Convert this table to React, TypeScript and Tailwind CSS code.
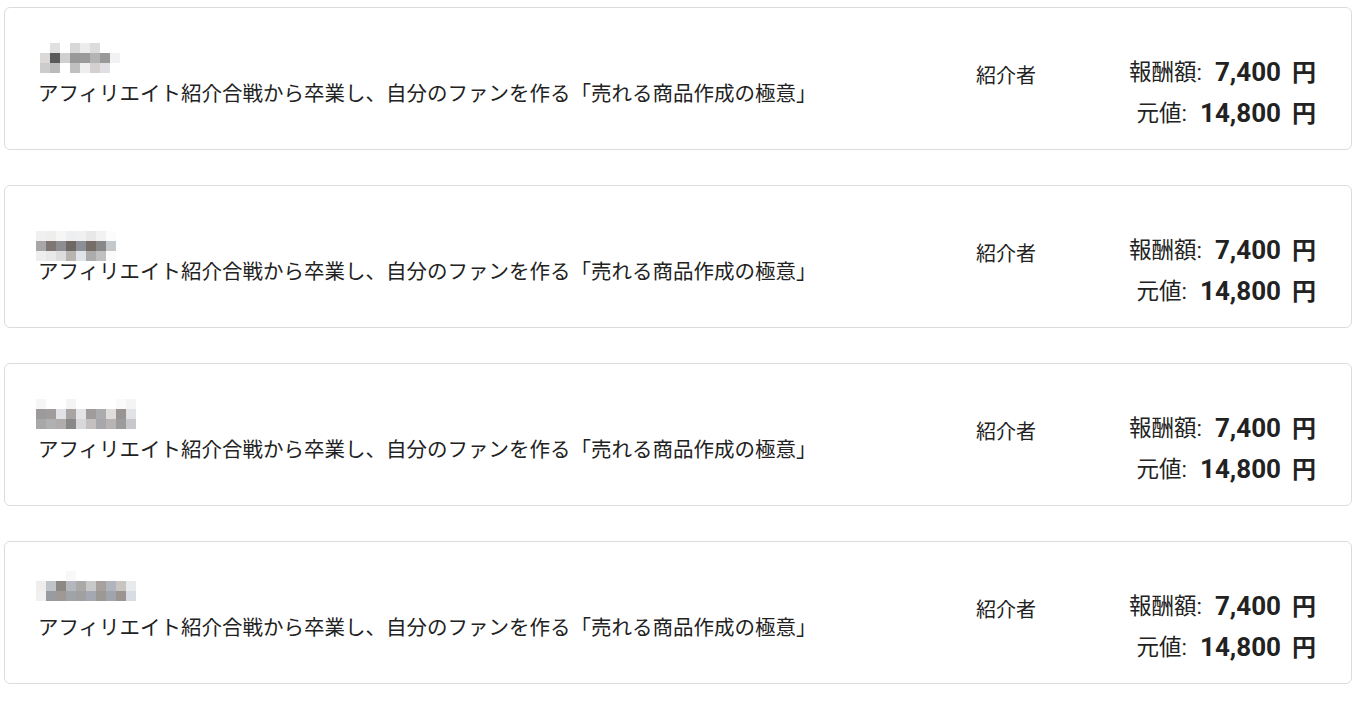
import React from "react";

type Item = {
  imgTop: number;
  imgLeft: number;
  rows: string[][];
};

const TITLE = "アフィリエイト紹介合戦から卒業し、自分のファンを作る「売れる商品作成の極意」";

// モザイク処理された名前部分（10px ブロック）
const items: Item[] = [
  {
    imgTop: 6,
    imgLeft: 0,
    rows: [
      ["#ffffff", "#e0e0e0", "#ffffff", "#d8d8d8", "#ececec", "#dcdcdc", "#ffffff", "#ffffff"],
      ["#dcd8d8", "#5a5a5a", "#d0d0d0", "#999999", "#9a9a9a", "#b4b4b4", "#999999", "#f2f2f4"],
      ["#cccccc", "#bbbbbb", "#ffffff", "#c0c0c0", "#eeeeee", "#d4d0d0", "#e0e0e4", "#ffffff"],
    ],
  },
  {
    imgTop: 16,
    imgLeft: -4,
    rows: [
      ["#f0f0f0", "#eeeeee", "#f6f6f4", "#eeeff0", "#f0f0f0", "#e8e8e8", "#f2f2f2", "#fcfcfc"],
      ["#a8a6a6", "#7e7672", "#8c8e90", "#706864", "#8c9096", "#766c68", "#888888", "#c4c8cc"],
      ["#eeeeee", "#e8e8e8", "#dddddd", "#b8b4b0", "#e0e4e8", "#acacac", "#c0c0c0", "#fafafa"],
    ],
  },
  {
    imgTop: 6,
    imgLeft: -4,
    rows: [
      ["#f6f6f6", "#ffffff", "#ffffff", "#f4f4f4", "#ffffff", "#ffffff", "#ffffff", "#ffffff", "#fafafa", "#f4f4f4"],
      ["#9c9a9a", "#a09c9c", "#e0e2e6", "#a8a4a4", "#e4e4e6", "#a09c9c", "#aaacae", "#e0dcdc", "#989494", "#e0e2e6"],
      ["#a8a8a8", "#b0b0b0", "#b0acac", "#888888", "#d8d8dc", "#c4c0c0", "#a8a8ac", "#b8b4b4", "#9c9c9c", "#c8c8cc"],
    ],
  },
  {
    imgTop: 0,
    imgLeft: -4,
    rows: [
      ["#ffffff", "#ffffff", "#ffffff", "#f8f8f8", "#ffffff", "#ffffff", "#ffffff", "#ffffff", "#ffffff", "#ffffff"],
      ["#f0eeec", "#c0c4c8", "#8c8884", "#b4b8bc", "#aca8a8", "#c8c8c8", "#a8a09c", "#b0b4bc", "#c8c4c0", "#e8eaee"],
      ["#f0f0f0", "#989ca0", "#a09894", "#a0a4a8", "#a0a0a0", "#a4a8b0", "#9c9894", "#a0a4ac", "#9c9490", "#d8dce4"],
    ],
  },
];

const Mosaic = ({ item }: { item: Item }) => (
  <div className="h-[46px]">
    <div className="flex flex-col" style={{ marginTop: item.imgTop, marginLeft: item.imgLeft }}>
      {item.rows.map((row, i) => (
        <div key={i} className="flex">
          {row.map((c, j) => (
            <div key={j} className="w-[10px] h-[10px]" style={{ backgroundColor: c }} />
          ))}
        </div>
      ))}
    </div>
  </div>
);

const Price = ({ label, value }: { label: string; value: string }) => (
  <div className="flex items-center h-[41px] text-[#222]">
    <span className="text-[22.5px]">{label}</span>
    <span className="ml-[13px] text-[26px] font-bold">{value}</span>
    <span className="ml-[11px] text-[24px] font-bold">円</span>
  </div>
);

const Card = ({ item, first }: { item: Item; first: boolean }) => (
  <div
    className={`flex h-[143px] w-[1348px] rounded-md border border-[#dcdcdc] bg-white pl-[35px] pr-[35px] ${
      first ? "" : "mt-[35px]"
    }`}
  >
    <div className="flex-1 flex flex-col pt-[29px]">
      <Mosaic item={item} />
      <p className="text-[20.5px] leading-[20px] mt-[1px] -ml-[2px] text-[#222]">{TITLE}</p>
    </div>
    <div className="w-[130px] pt-[54px]">
      <span className="text-[20px] leading-[28px] text-[#222]">紹介者</span>
    </div>
    <div className="w-[210px] pt-[44px] flex flex-col items-end">
      <Price label="報酬額:" value="7,400" />
      <Price label="元値:" value="14,800" />
    </div>
  </div>
);

export default function App() {
  return (
    <div
      className="min-h-screen bg-white pt-[7px] pl-[4px]"
      style={{ fontFamily: 'Roboto, "Noto Sans CJK JP", sans-serif' }}
    >
      {items.map((item, i) => (
        <Card key={i} item={item} first={i === 0} />
      ))}
    </div>
  );
}
